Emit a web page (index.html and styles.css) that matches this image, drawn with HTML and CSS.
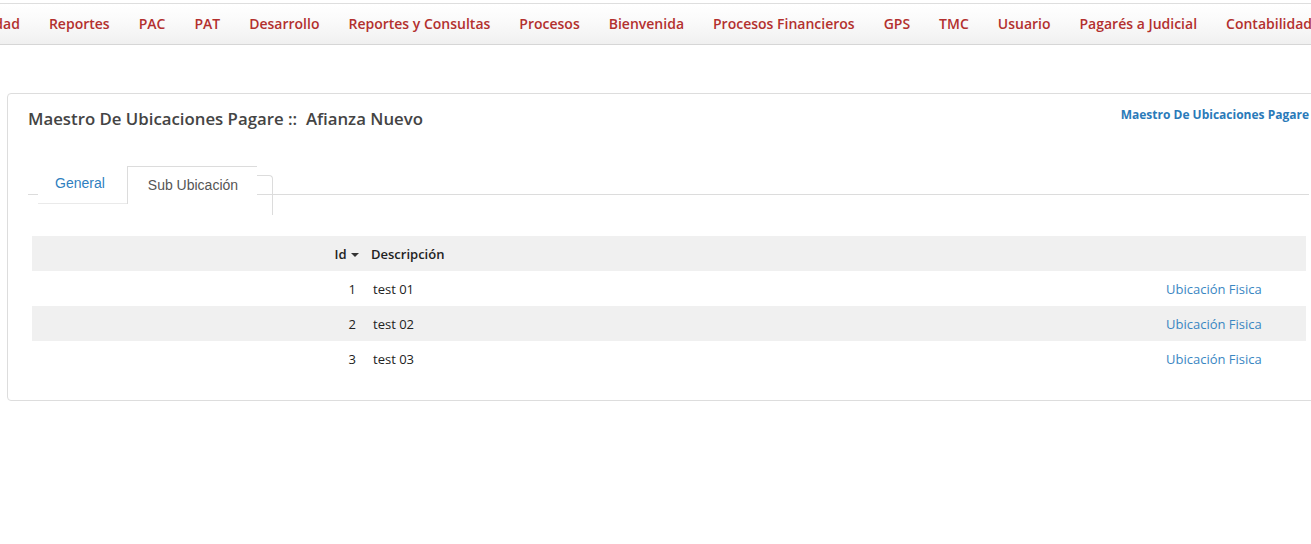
FILE: index.html
```html
<!DOCTYPE html>
<html lang="es">
<head>
<meta charset="utf-8">
<title>Maestro De Ubicaciones Pagare</title>
<link rel="stylesheet" href="styles.css">
</head>
<body>
<nav class="topnav">
  <ul class="menu">
    <li class="menu-item"><a href="#">Seguridad</a></li>
    <li class="menu-item"><a href="#">Reportes</a></li>
    <li class="menu-item"><a href="#">PAC</a></li>
    <li class="menu-item"><a href="#">PAT</a></li>
    <li class="menu-item"><a href="#">Desarrollo</a></li>
    <li class="menu-item"><a href="#">Reportes y Consultas</a></li>
    <li class="menu-item"><a href="#">Procesos</a></li>
    <li class="menu-item"><a href="#">Bienvenida</a></li>
    <li class="menu-item"><a href="#">Procesos Financieros</a></li>
    <li class="menu-item"><a href="#">GPS</a></li>
    <li class="menu-item"><a href="#">TMC</a></li>
    <li class="menu-item"><a href="#">Usuario</a></li>
    <li class="menu-item"><a href="#">Pagarés a Judicial</a></li>
    <li class="menu-item"><a href="#">Contabilidad</a></li>
  </ul>
</nav>

<main class="main">
  <section class="card">
    <header class="card-header">
      <h1 class="card-title">Maestro De Ubicaciones Pagare ::&nbsp; Afianza Nuevo</h1>
      <a class="crumb" href="#">Maestro De Ubicaciones Pagare</a>
    </header>

    <ul class="tabs">
      <li class="tab"><a href="#">General</a></li>
      <li class="tab tab-active"><span>Sub Ubicación</span></li>
    </ul>

    <table class="grid">
      <thead>
        <tr>
          <th class="col-id">Id <span class="caret"></span></th>
          <th class="col-desc">Descripción</th>
          <th class="col-link"></th>
        </tr>
      </thead>
      <tbody>
        <tr>
          <td class="col-id">1</td>
          <td class="col-desc">test 01</td>
          <td class="col-link"><a href="#">Ubicación Fisica</a></td>
        </tr>
        <tr class="alt">
          <td class="col-id">2</td>
          <td class="col-desc">test 02</td>
          <td class="col-link"><a href="#">Ubicación Fisica</a></td>
        </tr>
        <tr>
          <td class="col-id">3</td>
          <td class="col-desc">test 03</td>
          <td class="col-link"><a href="#">Ubicación Fisica</a></td>
        </tr>
      </tbody>
    </table>
  </section>
</main>
</body>
</html>
```

FILE: styles.css
```css
html, body {
  margin: 0;
  padding: 0;
  background: #fff;
  overflow: hidden;
}

body {
  font-family: "Open Sans", "Noto Sans", "DejaVu Sans", sans-serif;
  color: #333;
}

a {
  text-decoration: none;
}

/* ---------- top navigation ---------- */
.topnav {
  margin-top: 3px;
  height: 40px;
  border-top: 1px solid #dedede;
  border-bottom: 1px solid #d6d6d6;
  background: linear-gradient(to bottom, #ffffff 0%, #f9f9f9 50%, #f0f0f0 100%);
  overflow: hidden;
}

.menu {
  list-style: none;
  margin: -1px 0 0 -48px;
  padding: 0;
  height: 100%;
  display: flex;
  align-items: center;
  gap: 29px;
  white-space: nowrap;
}

.menu-item a {
  color: #b3302e;
  font-size: 14px;
  font-weight: 600;
}

/* ---------- page ---------- */
.main {
  padding: 48px 0 0 7px;
}

.card {
  box-sizing: border-box;
  width: 1323px;
  height: 308px;
  border: 1px solid #dddddd;
  border-radius: 4px;
  padding: 14px 20px 0 20px;
}

.card-header {
  display: flex;
  align-items: flex-start;
}

.card-title {
  margin: 0;
  font-size: 16.8px;
  font-weight: 600;
  line-height: 22px;
  color: #444;
}

.crumb {
  margin-left: auto;
  margin-top: -4px;
  font-size: 12px;
  font-weight: 700;
  line-height: 22px;
  color: #2a7ab9;
}

/* ---------- tabs ---------- */
.tabs {
  list-style: none;
  margin: 36px 0 0 0;
  padding: 0 0 0 10px;
  height: 28px;
  border-bottom: 1px solid #dcdcdc;
  display: flex;
  align-items: flex-start;
}

.tab {
  box-sizing: border-box;
  height: 38px;
  background: #fff;
  font-family: "Liberation Sans", Arial, sans-serif;
  font-size: 14px;
  line-height: 16px;
}

.tab a {
  display: block;
  padding: 9px 22px 0 17px;
  color: #2f7fc0;
  height: 100%;
  box-sizing: border-box;
  border-bottom: 1px solid #eaeaea;
}

.tab-active {
  position: relative;
  width: 130px;
  padding: 10px 0 0 20px;
  border-left: 1px solid #dcdcdc;
  border-top: 1px solid #dcdcdc;
  color: #555;
}

.tab-active::after {
  content: "";
  position: absolute;
  left: 100%;
  top: 8px;
  width: 15px;
  height: 39px;
  border-top: 1px solid #dcdcdc;
  border-right: 1px solid #dcdcdc;
  border-top-right-radius: 4px;
}

/* ---------- grid ---------- */
.grid {
  margin: 41px 0 0 4px;
  width: 1274px;
  border-collapse: collapse;
  table-layout: fixed;
  font-size: 13px;
  color: #222;
}

.grid th,
.grid td {
  height: 35px;
  padding: 0;
  vertical-align: middle;
}

.grid thead tr,
.grid tr.alt {
  background: #f0f0f0;
}

.grid th {
  font-size: 13px;
  font-weight: 600;
  text-align: left;
  color: #222;
}

.grid .col-id {
  width: 331px;
  text-align: right;
  padding-right: 7px;
  box-sizing: border-box;
}

.grid th.col-id {
  padding-right: 4px;
}

.grid .col-desc {
  padding-left: 10px;
}

.grid th.col-desc {
  padding-left: 8px;
}

.grid .col-link {
  width: 140px;
  padding-left: 4px;
}

.grid .col-link a {
  color: #3a86c2;
}

.caret {
  display: inline-block;
  width: 0;
  height: 0;
  margin-left: 1px;
  vertical-align: middle;
  border-left: 4px solid transparent;
  border-right: 4px solid transparent;
  border-top: 4px solid #333;
}
```
